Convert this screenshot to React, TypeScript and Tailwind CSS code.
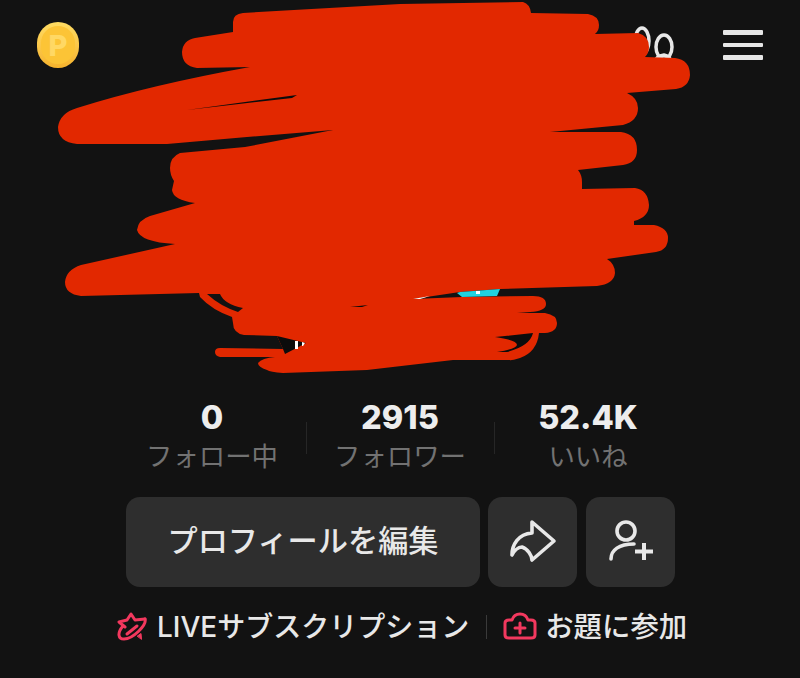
const FONT = "font-['Inter','Noto_Sans_CJK_JP',sans-serif]";

const STATS = [
  { value: '0', label: 'フォロー中' },
  { value: '2915', label: 'フォロワー' },
  { value: '52.4K', label: 'いいね' },
];

// hand-drawn red scribble that hides the avatar and name
function Scribble() {
  return (
    <svg className="absolute left-0 top-0 pointer-events-none" width="800" height="678" viewBox="0 0 800 678">
      <path
        fill="#e22800"
        d="M233 22 Q233 14 243 13 L400 4 L523 2 Q530 4 531 13 L588 14 Q599 16 599 25 Q599 31 595 34 L638 33 Q649 36 649 47 Q649 53 645 57 L675 58 Q690 60 690 75 Q689 87 676 89 L627 93 Q638 98 638 108 Q638 121 623 125 L550 132 L621 132 Q637 134 637 150 Q637 163 623 165 L578 170 Q582 175 582 182 L582 189 L635 188 Q648 190 649 205 Q649 217 634 221 L634 225 L654 225 Q668 228 668 238 Q668 250 656 252 L607 259 Q615 264 615 273 Q614 284 597 286 L500 289 L460 292 L413 299 L462 297 L533 296 Q546 296 546 304 Q546 311 530 312 L517 313 L545 313 Q557 315 557 323 Q557 332 545 333 L539 333 Q537 352 520 358 Q510 361 510 360 L453 360 L367 370 L283 373 Q270 372 267 370 Q258 367 258 363 Q262 358 275 357 L220 357 Q215 356 215 352 Q215 348 220 348 L283 349 L277 336 L244 335 Q233 333 233 323 L232 317 Q212 310 200 297 L199 293 L81 296 Q65 294 65 282 Q66 270 81 265 L175 244 Q140 242 137 230 Q138 220 150 216 L195 203 Q173 200 172 190 L174 181 Q170 175 170 168 Q170 157 180 153 L245 147 L333 130 L247 137 L167 144 L77 144 Q58 142 58 127 Q60 113 77 108 Q150 85 250 67 L197 68 Q182 66 182 52 Q183 40 195 38 L233 32 Z"
      />
      {/* gaps in the scribble */}
      <path d="M187 110 L297 95 L292 98 Z" fill="#0c0c0c" />
      <path d="M207 294 L220 294 Q224 304 243 308 L238 312 Q220 306 207 294 Z" fill="#121212" />
      <path d="M495 337 L533 333 Q530 346 507 352 L497 352 Q516 349 517 345 Q517 340 495 337 Z" fill="#0c0c0c" />
      <path d="M350 307 L368 305 L362 307 Z" fill="#0c0c0c" />
      {/* bits of the avatar still showing through */}
      <path d="M277 336 L306 343 L285 354 L283 349 Z" fill="#0c0c0c" />
      <path d="M295 341 L298 341 L298 349 L295 349 Z" fill="#fff" />
      <path d="M302 342 L305 343 L303 346 L302 346 Z" fill="#fff" />
      <path d="M457 293 L462 297 L497 296 L500 289 L460 292 Z" fill="#22d3e0" />
      <rect x="476" y="291" width="4" height="3" fill="#fff" />
      <path d="M413 299 L430 296 L420 299 Z" fill="#fff" />
    </svg>
  );
}

function Coin() {
  return (
    <div className="w-[42px] h-[46px] rounded-full bg-linear-to-b from-[#ffdc62] to-[#f6b32c] flex items-center justify-center">
      <div className="w-[34px] h-[38px] rounded-full bg-[#fcc436] flex items-center justify-center">
        <span className="text-[29px] leading-none font-extrabold text-[#ffd864] font-['Inter',sans-serif]">P</span>
      </div>
    </div>
  );
}

function FriendsIcon() {
  return (
    <svg width="42" height="40" viewBox="633 22 42 40" fill="none" stroke="#e8e8e8" strokeWidth="3.5">
      <ellipse cx="642" cy="38" rx="7" ry="13" />
      <ellipse cx="664" cy="44" rx="8" ry="12" />
      <path d="M654 60 Q656 53 664 52 Q670 53 672 60" />
    </svg>
  );
}

function MenuIcon() {
  return (
    <div className="flex flex-col gap-[8px] w-[40px]">
      <div className="h-[4.5px] rounded-[1px] bg-[#e6e6e6]" />
      <div className="h-[4.5px] rounded-[1px] bg-[#e6e6e6]" />
      <div className="h-[4.5px] rounded-[1px] bg-[#e6e6e6]" />
    </div>
  );
}

function ShareIcon() {
  return (
    <svg width="48" height="48" viewBox="508 518 48 48" fill="none" stroke="#e8e8e8" strokeWidth="3.6" strokeLinejoin="round" strokeLinecap="round">
      <path d="M531 522 L553 541 L531 560 C531 556 527 549 521 547 C517 547 513 551 511 555 C511 545 517 534 531 533 Z" />
    </svg>
  );
}

function AddUserIcon() {
  return (
    <svg width="48" height="48" viewBox="606 520 48 48" fill="none" stroke="#e8e8e8" strokeWidth="3.6">
      <circle cx="625" cy="533" r="9" />
      <path d="M610 561 C610 552 618 546 633 546" strokeLinecap="round" />
      <path d="M634 553.5 H652 M643 545 V562" strokeWidth="4" />
    </svg>
  );
}

function StarIcon() {
  return (
    <svg width="32" height="30" viewBox="116 613 32 30" fill="none" stroke="#f2385e" strokeWidth="3" strokeLinejoin="round" strokeLinecap="round">
      <path d="M125 628 L119 623 L127 621 L131 615 L135 621 L145 620" />
      <path d="M145 620 C147 626 133 640 124 640 C118 640 117 634 123 627" />
      <path d="M137 627 L127 635" />
      <path d="M137.5 637 L141 634.5 L141.5 640 Z" fill="#f2385e" strokeWidth="1" />
    </svg>
  );
}

function CameraPlusIcon() {
  return (
    <svg width="34" height="30" viewBox="503 612 34 30" fill="none" stroke="#f2385e" strokeWidth="3" strokeLinejoin="round" strokeLinecap="round">
      <path d="M505 623 Q505 620 509 620 L512 620 Q514 614 520 614 Q526 614 528 620 L531 620 Q535 620 535 623 L535 635 Q535 638 531 638 L509 638 Q505 638 505 635 Z" />
      <path d="M515 628 H525 M520 623 V633" />
    </svg>
  );
}

export default function App() {
  return (
    <div className={`relative w-[800px] h-[678px] overflow-hidden bg-[#121212] ${FONT}`}>
      {/* Header */}
      <div className="h-[90px] pl-[37px] pr-[37px] flex items-center justify-between">
        <Coin />
        <div className="flex items-center gap-[48px]">
          <FriendsIcon />
          <MenuIcon />
        </div>
      </div>

      {/* Avatar / name area, scribbled out */}
      <div className="h-[310px]" />

      {/* Stats */}
      <div className="flex justify-center items-center">
        {STATS.map((s, i) => (
          <div key={s.label} className="flex items-center">
            {i > 0 && <div className="w-px h-[32px] bg-[#262626]" />}
            <div className="w-[187px] flex flex-col items-center">
              <span className="text-[32.5px] leading-[36px] font-extrabold text-[#ededed]">{s.value}</span>
              <span className="text-[26.4px] leading-[40px] text-[#727272]">{s.label}</span>
            </div>
          </div>
        ))}
      </div>

      {/* Buttons */}
      <div className="mt-[21px] pl-[126px] flex gap-[9px]">
        <button className="w-[354px] h-[90px] mr-[-1px] rounded-[14px] bg-[#2e2e2e] text-[30.2px] font-medium text-[#e8e8e8]">
          プロフィールを編集
        </button>
        <button className="w-[89px] h-[90px] rounded-[14px] bg-[#2e2e2e] flex items-center justify-center">
          <ShareIcon />
        </button>
        <button className="w-[89px] h-[90px] rounded-[14px] bg-[#2e2e2e] flex items-center justify-center">
          <AddUserIcon />
        </button>
      </div>

      {/* Links */}
      <div className="mt-[22px] pl-[116px] flex items-center">
        <div className="flex items-center gap-[9px]">
          <StarIcon />
          <span className="text-[28px] leading-[36px] font-medium text-[#e8e8e8]">LIVEサブスクリプション</span>
        </div>
        <div className="w-px h-[24px] bg-[#3a3a3a] ml-[17px] mr-[16px]" />
        <div className="flex items-center gap-[8px]">
          <CameraPlusIcon />
          <span className="text-[28.4px] leading-[36px] font-medium text-[#e8e8e8]">お題に参加</span>
        </div>
      </div>

      <Scribble />
    </div>
  );
}
